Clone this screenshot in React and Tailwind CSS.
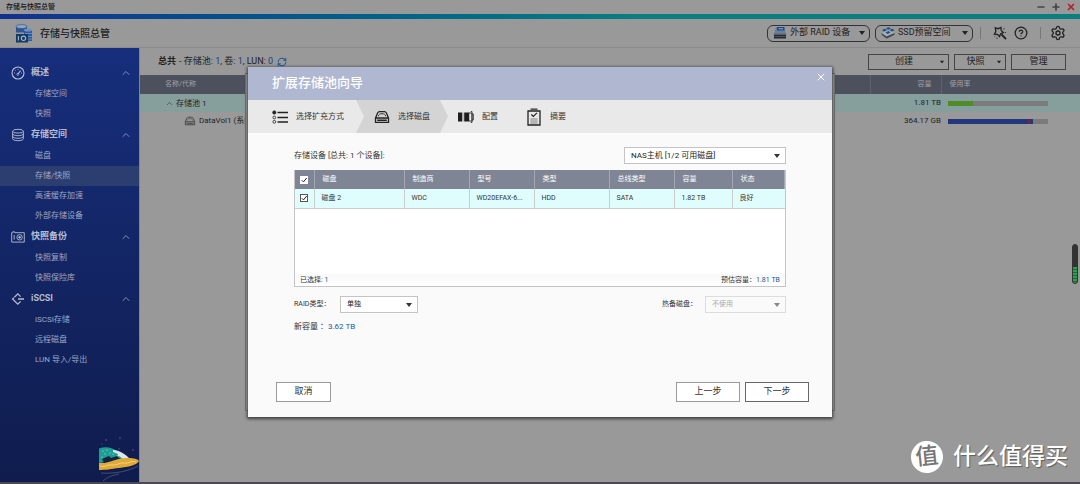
import { useState } from "react";
import { ChevronUp, CircleQuestionMark, Minus, Plus, RefreshCw, Settings, X } from "lucide-react";

const MENU = [
  { label: "概述", icon: GaugeIcon, items: ["存储空间", "快照"] },
  { label: "存储空间", icon: DisksIcon, items: ["磁盘", "存储/快照", "高速缓存加速", "外部存储设备"], active: "存储/快照" },
  { label: "快照备份", icon: CameraIcon, items: ["快照复制", "快照保险库"] },
  { label: "iSCSI", icon: IscsiIcon, items: ["iSCSI存储", "远程磁盘", "LUN 导入/导出"] },
];

const COLUMNS = ["磁盘", "制造商", "型号", "类型", "总线类型", "容量", "状态"];
const DISK = ["磁盘 2", "WDC", "WD20EFAX-6...", "HDD", "SATA", "1.82 TB", "良好"];

function GaugeIcon() {
  return (
    <svg viewBox="0 0 14 14" className="h-3.5 w-3.5" fill="none" stroke="currentColor" aria-hidden="true">
      <circle cx="7" cy="7" r="6" strokeWidth="1.1" />
      <path d="M7 8l2.6-3.4" strokeWidth="1.1" />
      <circle cx="6.8" cy="8.3" r="1" strokeWidth=".8" />
      <path d="M3 7h1M7 2.8v1M10 7h1M4.2 4.3l.7.7" strokeWidth=".8" />
    </svg>
  );
}

function DisksIcon() {
  return (
    <svg viewBox="0 0 14 14" className="h-3.5 w-3.5" fill="none" stroke="currentColor" strokeWidth=".9" aria-hidden="true">
      <ellipse cx="7" cy="3.2" rx="5.4" ry="1.9" />
      <path d="M1.6 3.2v7.6c0 1 2.4 1.9 5.4 1.9s5.4-.9 5.4-1.9V3.2M1.6 5.8c0 1 2.4 1.9 5.4 1.9s5.4-.9 5.4-1.9M1.6 8.4c0 1 2.4 1.9 5.4 1.9s5.4-.9 5.4-1.9" />
    </svg>
  );
}

function CameraIcon() {
  return (
    <svg viewBox="0 0 14 14" className="h-3.5 w-3.5" fill="none" stroke="currentColor" strokeWidth=".9" aria-hidden="true">
      <path d="M.7 2.7h1V1.8h2v.9h9.6v9.4H.7zM3.2 5v4.6" />
      <circle cx="8.6" cy="7.3" r="2.7" />
      <circle cx="8.6" cy="7.3" r=".9" fill="currentColor" />
    </svg>
  );
}

function IscsiIcon() {
  return (
    <svg viewBox="0 0 14 14" className="h-3.5 w-3.5" fill="none" stroke="currentColor" strokeWidth="1.3" aria-hidden="true">
      <path d="M3.4 5.2L6.8 1.9l2.8 2.7M9.6 9.4l-2.8 2.7L1.6 7l1.3-1.3M7 7h6" />
    </svg>
  );
}

function AppLogo() {
  return (
    <svg viewBox="0 0 18 19" className="h-[19px] w-[18px]" aria-hidden="true">
      <path d="M1 2.5v6h11v-6z" fill="#2e5590" />
      <ellipse cx="6.5" cy="2.6" rx="5.5" ry="2" fill="#8ea6c4" stroke="#234a86" strokeWidth=".6" />
      <path d="M9 6h8v11H9z" fill="#2d5aa0" />
      <ellipse cx="13" cy="6" rx="4" ry="1.5" fill="#6f8fbd" />
      <path d="M10 9.500h7M10 12.500h7M10 15h7" stroke="#93a6c2" strokeWidth=".6" />
      <path d="M1 10h12v8.500H1z" fill="#123a63" />
      <path d="M3.400 12v4.500" stroke="#a9b5bf" strokeWidth="1.100" />
      <circle cx="8.500" cy="14.300" r="2.200" fill="none" stroke="#a9b5bf" strokeWidth="1.100" />
    </svg>
  );
}

function RaidIcon() {
  return (
    <svg viewBox="0 0 14 12" className="h-3 w-3.5" aria-hidden="true">
      <path d="M3 0h8l2 7H1z" fill="#6d7f96" />
      <path d="M4 0h7.500v3.500H4z" fill="#1d4b8c" />
      <path d="M5.500 1.800h4.500" stroke="#8fa9cc" />
      <path d="M1 7.500h12v4H1z" fill="#24292f" />
      <path d="M.500 7h13M1.500 9.500h11" stroke="#59626c" strokeWidth=".8" />
    </svg>
  );
}

function SsdIcon() {
  return (
    <svg viewBox="0 0 14 12" className="h-3 w-3.5" aria-hidden="true">
      <path d="M.500 6L9 3l4.500 3.500L5.500 11z" fill="#a8adb2" />
      <path d="M.500 6l5 3.500v2L.800 8zM5.500 9.500l8-3.500v1.800l-8 4z" fill="#3c4650" />
      <path d="M1 3l3-1.200L6 3 3 4.500zM5 1l3-.8 2 1.200L7 2.700zM4.500 5.500l3-1.400 2 1.400-3 1.400zM8.500 3l3-1.200 2 1.400-3 1.300z" fill="#174f91" />
    </svg>
  );
}

function WandIcon() {
  return (
    <svg viewBox="0 0 14 14" className="h-3.5 w-3.5" fill="none" stroke="#222" aria-hidden="true">
      <path d="M2.200 1.800l3 .9L8 1.500l.2 3 2.200 2-2.700 1.300L6.500 10.500 4.400 8.300l-3-.1 1.500-2.800z" strokeWidth="1.300" />
      <path d="M8.500 8.500l4.500 4.500" strokeWidth="1.800" />
      <path d="M11 2v1.500M12.500 6v1M4 11.500v1.500M1.500 10.500l.8-.6" strokeWidth=".8" />
    </svg>
  );
}

function DriveIcon({ className }) {
  return (
    <svg viewBox="0 0 16 14" className={className} fill="none" stroke="currentColor" aria-hidden="true">
      <path d="M1.500 8L3.600 3Q4.200 1.700 5.500 1.700h5q1.300 0 1.900 1.300l2.100 5v4.300h-13zM1.500 8h13" strokeWidth="1.300" />
      <path d="M4.300 6.200c.3-1.800 1.800-2.500 3.700-2.500s3.400.7 3.700 2.500" strokeWidth=".9" />
      <path d="M3.200 10.200h9.600" strokeWidth="1.500" />
    </svg>
  );
}

function ListIcon() {
  return (
    <svg viewBox="0 0 16 14" className="h-3.5 w-4" fill="none" stroke="#222" aria-hidden="true">
      <circle cx="2.300" cy="2.500" r="1.700" fill="#222" strokeWidth=".6" />
      <circle cx="2.300" cy="7.500" r="1.400" strokeWidth=".8" />
      <circle cx="2.300" cy="11.800" r="1.400" strokeWidth=".8" />
      <path d="M5.500 2.500H16M5.500 7.500H16M5.500 12H16" strokeWidth="1.300" />
    </svg>
  );
}

function ConfigIcon() {
  return (
    <svg viewBox="0 0 16 12" className="h-3 w-4" aria-hidden="true">
      <path d="M0 1.500h4v9H0zM6.200 1.500h5v9h-5z" fill="#1e1e1e" />
      <path d="M4.900 1.500v9" stroke="#888" strokeWidth="1" />
      <path d="M11 2h3v8h-3M12.800.5h1.200v11h-1.200M14 3h1.300v6H14" fill="none" stroke="#333" strokeWidth=".9" />
    </svg>
  );
}

function SummaryIcon() {
  return (
    <svg viewBox="0 0 16 18" className="h-[18px] w-4" fill="none" stroke="#222" aria-hidden="true">
      <path d="M2 3h12v14H2z" strokeWidth="1.300" />
      <path d="M4.500 1.200h7" stroke="#555" strokeWidth="1.600" />
      <path d="M5.300 6.500l2 2 3.700-3.700" strokeWidth="1.200" />
      <path d="M4.300 11h7.400M4.300 13h7.400M4.300 15h7.400" stroke="#777" strokeWidth=".9" />
    </svg>
  );
}

function BoatArt() {
  return (
    <svg viewBox="0 0 40 48" className="mt-auto h-12 w-10 self-end" aria-hidden="true">
      <path d="M0 14.500C6 12 13 13 20 18l8 7-28 4z" fill="#1f9c94" />
      <path d="M14 16c6 0 12 4 16 8l-6 1-4-3-2 1 1-3-5-2z" fill="#dfe6ea" />
      <path d="M3 25l7-3 2 2 6-2 3 3-8 2-8 2z" fill="#14223f" />
      <path d="M0 29c10 1 17-5 29-5 6 0 10 1 11 3-2 4-11 6-20 7-8 1-13 2-20 2z" fill="#e0aa35" />
      <path d="M1 32c5 2 7-2 12-1s7-3 12-2 7-3 12-1" fill="none" stroke="#f3d78c" strokeWidth=".9" />
      <path d="M2 39c14 1 28-2 37-7M4 47c4-4 10-6 16-7" fill="none" stroke="#46517a" strokeWidth=".9" />
      <g fill="#b9efe6">
        <circle cx="4" cy="17" r=".6" /><circle cx="8" cy="16" r=".6" /><circle cx="6" cy="20" r=".6" />
        <circle cx="11" cy="19" r=".6" /><circle cx="3" cy="23" r=".6" /><circle cx="14" cy="20" r=".6" />
      </g>
      <g fill="#59659a">
        <circle cx="7" cy="6" r=".8" /><circle cx="21" cy="4" r=".8" /><circle cx="3" cy="10" r=".6" />
        <circle cx="20" cy="15" r=".7" /><circle cx="34" cy="16" r=".8" fill="#8e4a93" />
      </g>
    </svg>
  );
}

function Caret({ className }) {
  return (
    <svg viewBox="0 0 6 4" className={`h-1 w-1.5 ${className}`} fill="currentColor" aria-hidden="true">
      <path d="M0 0h6L3 4z" />
    </svg>
  );
}

function Dropdown({ id, value, className, disabled }) {
  return (
    <span className={`relative inline-flex ${className}`}>
      <select
        id={id}
        disabled={disabled}
        aria-label={id === "host" ? "存储设备" : undefined}
        className="h-[17px] w-full appearance-none border border-[#c4c4c4] bg-white pl-1.5 text-[#222] disabled:border-[#ddd] disabled:bg-[#fafafa] disabled:text-[#aaa] disabled:opacity-100"
      >
        <option>{value}</option>
      </select>
      <Caret className={`pointer-events-none absolute top-[7px] right-1.5 ${disabled ? "text-[#888]" : "text-[#333]"}`} />
    </span>
  );
}

function CheckBox({ label, checked, onChange, className }) {
  return (
    <span className="relative block h-2 w-2">
      <input
        type="checkbox"
        aria-label={label}
        checked={checked}
        onChange={onChange}
        className={`peer block h-2 w-2 appearance-none border bg-white ${className}`}
      />
      <svg viewBox="0 0 8 8" className="pointer-events-none absolute inset-0 hidden h-2 w-2 peer-checked:block" fill="none" stroke="#222" aria-hidden="true">
        <path d="M1.800 4.200l1.700 1.700L6.700 2" />
      </svg>
    </span>
  );
}

function Sidebar() {
  return (
    <aside className="flex w-[140px] shrink-0 flex-col border-r border-[#858585] bg-linear-to-b from-[#162e7c] to-[#0f1c4d] pt-3.5 text-[8px] text-[#9ea8c4]">
      <nav aria-label="主菜单">
        {MENU.map(({ label, icon: Icon, items, active }) => (
          <section key={label}>
            <button type="button" className="flex h-[22px] w-full items-center pr-[7px] pl-[11px] text-[9px] font-bold text-[#b6bdcf]">
              <Icon />
              <span className="ml-1.5">{label}</span>
              <ChevronUp className="ml-auto h-3 w-3 text-[#8390b8]" strokeWidth={2} />
            </button>
            {items.map((item) => (
              <a key={item} href="#" className={`flex h-5 items-center pl-[35px] ${item === active ? "bg-[#2c3d70]" : ""}`}>
                {item}
              </a>
            ))}
          </section>
        ))}
      </nav>
      <BoatArt />
    </aside>
  );
}

function AppHeader() {
  return (
    <header className="flex h-[29px] items-center border-b border-[#8b8b8b] pr-3.5 pl-[15px] text-[#222]">
      <AppLogo />
      <h1 className="ml-[7px] text-[10px] font-medium">存储与快照总管</h1>
      <div className="ml-auto flex items-center text-[9px]">
        <button type="button" className="flex h-[17px] w-[103px] items-center rounded-md border border-[#333] pl-[5px]">
          <RaidIcon />
          <span className="ml-[3px]">外部 RAID 设备</span>
          <Caret className="mr-1 ml-auto" />
        </button>
        <button type="button" className="ml-[5px] flex h-[17px] w-[98px] items-center rounded-md border border-[#333] pl-[5px]">
          <SsdIcon />
          <span className="ml-[3px]">SSD预留空间</span>
          <Caret className="mr-1 ml-auto" />
        </button>
        <span className="ml-[7px] h-3 w-px bg-[#777]" />
        <button type="button" aria-label="工具" className="ml-3"><WandIcon /></button>
        <button type="button" aria-label="帮助" className="ml-[7px]"><CircleQuestionMark className="h-3.5 w-3.5" strokeWidth={2.2} /></button>
        <span className="ml-3 h-3 w-px bg-[#777]" />
        <button type="button" aria-label="设置" className="ml-[9px]"><Settings className="h-4 w-4" strokeWidth={2} /></button>
      </div>
    </header>
  );
}

function StorageList() {
  return (
    <main className="min-w-0 flex-1 text-[8px] text-[#222]">
      <div className="flex h-[27px] items-center pr-3.5 pl-[18px] text-[9px]">
        <p className="flex items-center">
          <b className="mr-[3px]">总共</b>
          <span>
            - 存储池: <a href="#" className="text-[#1c3f7c]">1</a>, 卷: <a href="#" className="text-[#1c3f7c]">1</a>, LUN:{" "}
            <a href="#" className="text-[#1c3f7c]">0</a>
          </span>
          <button type="button" aria-label="刷新" className="ml-1 text-[#22599a]"><RefreshCw className="h-[10px] w-[10px]" strokeWidth={2.5} /></button>
        </p>
        <div className="ml-auto flex gap-[5px]">
          <button type="button" className="flex h-4 w-[81px] items-center border border-[#444] pr-[3px]">
            <span className="flex-1 text-center">创建</span>
            <Caret className="scale-75" />
          </button>
          <button type="button" className="flex h-4 w-[52px] items-center border border-[#444] pr-[3px]">
            <span className="flex-1 text-center">快照</span>
            <Caret className="scale-75" />
          </button>
          <button type="button" className="h-4 w-[55px] border border-[#444]">管理</button>
        </div>
      </div>
      <table className="w-full table-fixed text-left">
        <thead className="bg-[#4c515d] text-[7px] text-[#a0a3a9]">
          <tr className="h-[19px]">
            <th className="pl-[25px] font-normal">名称/代称</th>
            <th className="w-[71px] border-x border-[#5d626d] pr-[9px] text-right font-normal">容量</th>
            <th className="w-[139px] pl-2 font-normal">使用率</th>
          </tr>
        </thead>
        <tbody>
          <tr className="h-[18px] bg-[#869f9d]">
            <td>
              <span className="flex items-center pt-px pl-[25px]">
                <ChevronUp className="mr-0.5 h-[9px] w-[9px] text-[#444]" />
                存储池 1
              </span>
            </td>
            <td className="text-right">1.81 TB</td>
            <td className="pl-[7px]">
              <div className="h-[5px] w-[100px] bg-[#7b7b7b]"><div className="h-full w-1/4 bg-[#4f8c29]" /></div>
            </td>
          </tr>
          <tr className="h-[18px]">
            <td>
              <span className="flex items-center pl-11 whitespace-nowrap">
                <DriveIcon className="mr-[3px] h-[10px] w-3 text-[#444]" />
                DataVol1 (系统)
              </span>
            </td>
            <td className="text-right">364.17 GB</td>
            <td className="pl-[7px]">
              <div className="flex h-[5px] w-[100px] bg-[#7b7b7b]">
                <div className="w-4/5 bg-[#23387c]" />
                <div className="w-0.5 bg-[#8b1c34]" />
                <div className="w-[3px] bg-[#23387c]" />
              </div>
            </td>
          </tr>
        </tbody>
      </table>
    </main>
  );
}

function Steps() {
  return (
    <ol className="flex h-[33px] bg-[#e9e9e9] text-[8px] text-[#333]">
      <li className="flex w-[108px] items-center gap-2 pl-6 whitespace-nowrap"><ListIcon />选择扩充方式</li>
      <li
        aria-current="step"
        className="flex w-[92px] items-center gap-2 bg-[#d4d4d4] pl-[18px] [clip-path:polygon(0_0,84px_0,100%_50%,84px_100%,0_100%,8px_50%)]"
      >
        <DriveIcon className="h-3.5 w-4 text-[#222]" />选择磁盘
      </li>
      <li className="flex items-center gap-2 pl-[10px]"><ConfigIcon />配置</li>
      <li className="flex items-center gap-2 pl-7"><SummaryIcon />摘要</li>
    </ol>
  );
}

function DiskTable() {
  const [selected, setSelected] = useState(true);
  const toggle = () => setSelected((v) => !v);

  return (
    <div className="mt-1.5 flex h-[117px] flex-col border border-t-0 border-[#c4c4c4] bg-white text-[7px] text-[#333]">
      <table className="w-full table-fixed text-left">
        <colgroup>
          <col className="w-[19px]" />
          <col className="w-[90px]" />
          <col className="w-[65px]" />
          <col className="w-[65px]" />
          <col className="w-[75px]" />
          <col className="w-[65px]" />
          <col className="w-[58px]" />
          <col />
        </colgroup>
        <thead className="bg-[#7f8594] text-white">
          <tr className="h-[19px]">
            <th className="border-r border-[#a3a8b4] pl-[5px]">
              <CheckBox label="全选" checked={selected} onChange={toggle} className="border-white" />
            </th>
            {COLUMNS.map((name) => (
              <th key={name} className="border-r border-[#a3a8b4] pl-2 font-normal">{name}</th>
            ))}
          </tr>
        </thead>
        <tbody>
          <tr className="h-[19px] border-b border-[#ccc] bg-[#dffdfd]">
            <td className="border-r border-[#ccc] pl-[5px]">
              <CheckBox label="磁盘 2" checked={selected} onChange={toggle} className="border-[#555]" />
            </td>
            {DISK.map((value) => (
              <td key={value} className="border-r border-[#ccc] pl-[7px] whitespace-nowrap last:border-r-0">{value}</td>
            ))}
          </tr>
        </tbody>
      </table>
      <div className="mt-auto flex h-3 items-center justify-between bg-linear-to-b from-[#f8f8f8] to-white px-[5px] pt-px">
        <span>已选择: <span className="text-[#235a99]">1</span></span>
        <span>预估容量：<span className="text-[#235a99]">1.81 TB</span></span>
      </div>
    </div>
  );
}

function ExpandPoolDialog() {
  return (
    <div className="absolute inset-0 flex items-center justify-center">
      <div className="relative w-[584px]">
        <div className="absolute -inset-x-[3px] top-1.5 bottom-1.5 border border-[#777] bg-[#a3a3a3]" />
        <section
          role="dialog"
          aria-labelledby="dialog-title"
          className="relative bg-[#fafafa] shadow-[0_1px_3px_1px_rgba(0,0,0,0.6)]"
        >
          <header className="flex h-[33px] items-center bg-[#b0b7d1] pr-[5px] pb-0.5 pl-6 text-white">
            <h2 id="dialog-title" className="text-[13px] font-medium">扩展存储池向导</h2>
            <button type="button" aria-label="关闭" className="-mt-3 ml-auto"><X className="h-3 w-3" /></button>
          </header>
          <Steps />
          <div className="px-[46px] pt-3.5 text-[8px] text-[#333]">
            <div className="flex items-center justify-between">
              <span>存储设备 [总共: 1 个设备]:</span>
              <Dropdown id="host" value="NAS主机 [1/2 可用磁盘]" className="w-[162px]" />
            </div>
            <DiskTable />
            <div className="mt-[9px] flex items-center text-[7px]">
              <label htmlFor="raid" className="w-[46px]">RAID类型：</label>
              <Dropdown id="raid" value="单独" className="w-[78px]" />
              <label htmlFor="spare" className="ml-auto w-[43px]">热备磁盘：</label>
              <Dropdown id="spare" value="不使用" className="w-[81px]" disabled />
            </div>
            <p className="mt-1.5 h-4 leading-4">
              新容量 ：<span className="text-[#235a99]">3.62 TB</span>
            </p>
          </div>
          <footer className="mt-[47px] flex gap-[5px] pr-[23px] pb-[15px] pl-7 text-[9px] text-[#333]">
            <button type="button" className="mr-auto h-5 w-[55px] border border-[#999] bg-white">取消</button>
            <button type="button" className="h-5 w-16 border border-[#999] bg-white">上一步</button>
            <button type="button" className="h-5 w-16 border border-[#666] bg-white">下一步</button>
          </footer>
        </section>
      </div>
    </div>
  );
}

export default function App() {
  return (
    <div className="relative flex min-h-screen flex-col overflow-hidden bg-[#999] font-['Roboto','Noto_Sans_CJK_SC',sans-serif]">
      <div className="flex h-3.5 items-center pr-1 pl-1.5 text-[7px] font-medium text-[#111]">
        存储与快照总管
        <div className="ml-auto flex gap-[5px] text-[#444]">
          <button type="button" aria-label="最小化"><Minus className="h-[10px] w-[10px]" strokeWidth={4} /></button>
          <button type="button" aria-label="最大化"><Plus className="h-[10px] w-[10px]" strokeWidth={4} /></button>
          <button type="button" aria-label="关闭窗口" className="text-[#b3202a]"><X className="h-[10px] w-[10px]" strokeWidth={4} /></button>
        </div>
      </div>
      <div className="h-[5px] bg-linear-to-r from-[#12308f] to-[#0b7f80] to-60%" />
      <AppHeader />
      <div className="flex flex-1">
        <Sidebar />
        <StorageList />
      </div>
      <div className="h-0.5 bg-[#4b4850]" />
      <ExpandPoolDialog />
      <div className="absolute top-[244px] right-0.5 h-10 w-1.5 overflow-hidden rounded-full border border-[#333] bg-[#333]">
        <div className="mt-[22px] h-4 bg-[repeating-linear-gradient(#2fa04e_0_2px,#1c6b33_2px_3px)]" />
      </div>
      <div className="absolute right-3 bottom-[11px] flex items-center gap-[10px] text-white">
        <span className="flex h-8 w-8 -rotate-6 items-center justify-center rounded-full bg-white text-[23px] leading-8 font-medium text-[#777]">值</span>
        <span className="text-[23px] leading-8 font-medium text-shadow-[1px_1px_1px_rgba(0,0,0,0.4)]">什么值得买</span>
      </div>
    </div>
  );
}
